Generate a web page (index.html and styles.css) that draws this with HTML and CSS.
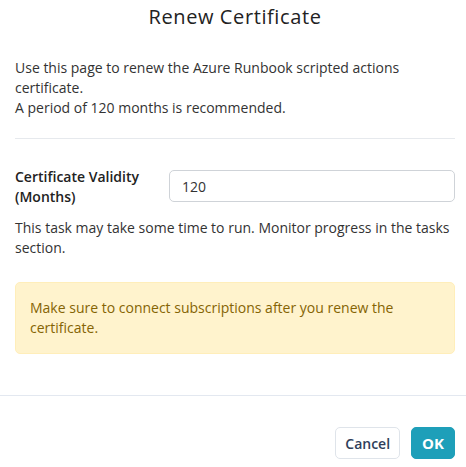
FILE: index.html
```html
<!DOCTYPE html>
<html lang="en">
<head>
<meta charset="utf-8">
<title>Renew Certificate</title>
<link rel="stylesheet" href="styles.css">
</head>
<body>
<div class="dialog">
  <div class="dialog-header">
    <h1 class="dialog-title">Renew Certificate</h1>
  </div>
  <div class="dialog-body">
    <p class="intro">Use this page to renew the Azure Runbook scripted actions certificate.<br>A period of 120 months is recommended.</p>
    <hr class="divider">
    <div class="form-row">
      <label class="form-label" for="validity">Certificate Validity (Months)</label>
      <input class="form-input" id="validity" type="text" value="120">
    </div>
    <p class="note">This task may take some time to run. Monitor progress in the tasks section.</p>
    <div class="alert">Make sure to connect subscriptions after you renew the certificate.</div>
  </div>
  <div class="dialog-footer">
    <button class="btn btn-cancel" type="button">Cancel</button>
    <button class="btn btn-ok" type="button">OK</button>
  </div>
</div>
</body>
</html>
```

FILE: styles.css
```css
* { box-sizing: border-box; }
html, body { margin: 0; padding: 0; background: #ffffff; }
body {
  font-family: "Open Sans", "Liberation Sans", sans-serif;
  font-size: 14px;
  line-height: 20px;
  color: #333333;
}
.dialog { width: 466px; }
.dialog-header {
  padding: 2px 11px 0 15px;
  text-align: center;
}
.dialog-title {
  margin: 0;
  font-family: "Open Sans", "Liberation Sans", sans-serif;
  font-weight: 400;
  font-size: 20px;
  letter-spacing: 0.6px;
  line-height: 30px;
  color: #222222;
}
.dialog-body {
  padding: 0 11px 0 15px;
}
.intro { margin: 26px 0 0 0; }
.divider {
  margin: 20px 0 0 0;
  border: 0;
  border-top: 1px solid #e6e9ed;
  height: 0;
}
.form-row {
  display: flex;
  align-items: flex-start;
  margin-top: 28px;
}
.form-label {
  width: 154px;
  flex: none;
  font-weight: 600;
  color: #222222;
}
.form-input {
  flex: 1;
  margin-top: 3px;
  height: 32px;
  border: 1px solid #cfd3d8;
  border-radius: 5px;
  padding: 0 12px;
  font-family: inherit;
  font-size: 14px;
  color: #333333;
  background: #ffffff;
}
.note { margin: 11px 0 0 0; }
.alert {
  margin-top: 24px;
  padding: 15px 14px;
  background: #fff3cd;
  border: 1px solid #ffeeba;
  border-radius: 5px;
  color: #856404;
}
.dialog-footer {
  margin-top: 41px;
  border-top: 1px solid #e3e8f0;
  padding: 31px 11px 0 15px;
  display: flex;
  justify-content: flex-end;
  gap: 11px;
}
.btn {
  height: 32px;
  border-radius: 5px;
  font-family: inherit;
  font-size: 14px;
  font-weight: 600;
  padding: 0 9px;
  cursor: pointer;
}
.btn-cancel {
  background: #ffffff;
  border: 1px solid #dfe4ea;
  color: #2f3e5a;
}
.btn-ok {
  background: #1e9fb9;
  border: 1px solid #1e9fb9;
  color: #ffffff;
  font-weight: 700;
  font-size: 15px;
  padding: 0 10px;
}
```
